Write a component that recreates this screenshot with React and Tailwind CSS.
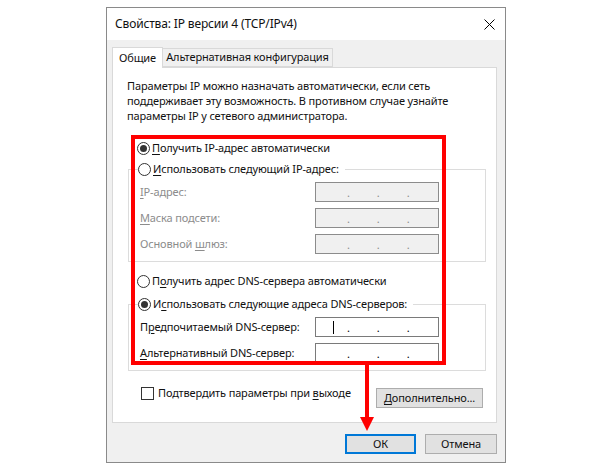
import React from "react";

const Radio = ({ checked }) => (
    <span className="w-[13px] h-[13px] rounded-full border border-[#333] bg-white flex items-center justify-center shrink-0">
        {checked && <span className="w-[7px] h-[7px] rounded-full bg-[#333]"></span>}
    </span>
);

// mnemonic letter, underlined like in Windows dialogs
const U = ({ children }) => <span className="underline underline-offset-[2px]">{children}</span>;

const IpField = ({ disabled, caret }) => (
    <div
        className={`relative w-[124px] h-[20px] border flex items-end pb-[3px] shrink-0 ${
            disabled ? "bg-[#f0f0f0] border-[#8c8c8c] text-[#8c8c8c]" : "bg-white border-[#7a7a7a] text-black"
        }`}
    >
        {caret && <span className="absolute left-[17px] top-[3px] w-px h-[13px] bg-black"></span>}
        <div className="flex gap-[27px] ml-[31px] leading-none">
            <span>.</span>
            <span>.</span>
            <span>.</span>
        </div>
    </div>
);

const FieldRow = ({ label, disabled, caret }) => (
    <div className="flex items-center h-[20px]">
        <span className={`w-[175px] whitespace-nowrap ${disabled ? "text-[#8c8c8c]" : "text-[#111]"}`}>{label}</span>
        <IpField disabled={disabled} caret={caret} />
    </div>
);

const Button = ({ children, primary, className = "" }) => (
    <div
        className={`h-[20px] bg-[#e1e1e1] flex items-center justify-center whitespace-nowrap ${
            primary ? "border-2 border-[#0078d7]" : "border border-[#adadad]"
        } ${className}`}
    >
        {children}
    </div>
);

export default function App() {
    return (
        <div
            className="relative w-[610px] h-[473px] bg-white pt-[7px] pl-[106px] text-[11px] tracking-[-0.15px] text-[#111] whitespace-nowrap"
            style={{ fontFamily: '"Noto Sans", "Liberation Sans", sans-serif' }}
        >
            {/* dialog */}
            <div className="w-[400px] h-[456px] border border-[#8a8a8a] bg-[#f0f0f0] flex flex-col">
                <div className="h-[32px] bg-white flex items-center justify-between pl-[8px] pr-[10px]">
                    <span className="text-[12px]">Свойства: IP версии 4 (TCP/IPv4)</span>
                    <svg width="11" height="11" viewBox="0 0 11 11">
                        <path d="M0.5 0.5 L10.5 10.5 M10.5 0.5 L0.5 10.5" stroke="#000" strokeWidth="1" />
                    </svg>
                </div>

                <div className="pl-[5px] pt-[7px]">
                    {/* tabs */}
                    <div className="flex items-end h-[21px] relative z-10">
                        <div className="w-[51px] h-[21px] bg-white border border-b-0 border-[#d9d9d9] flex items-center justify-center">
                            Общие
                        </div>
                        <div className="w-[170px] h-[19px] mb-px bg-[#f0f0f0] border border-l-0 border-[#d9d9d9] flex items-center justify-center">
                            Альтернативная конфигурация
                        </div>
                    </div>

                    {/* panel */}
                    <div className="w-[385px] h-[356px] -mt-px bg-white border border-[#d9d9d9]">
                        <p className="ml-[14px] mt-[10px] leading-[15px]">
                            Параметры IP можно назначать автоматически, если сеть
                            <br />
                            поддерживает эту возможность. В противном случае узнайте
                            <br />
                            параметры IP у сетевого администратора.
                        </p>

                        <div className="ml-[24px] mt-[17px] h-[16px] flex items-center gap-[2px]">
                            <Radio checked />
                            <span>
                                <U>П</U>олучить IP-адрес автоматически
                            </span>
                        </div>

                        <div className="ml-[15px] mt-[13px] w-[358px] border border-[#dcdcdc] pl-[11px] pb-[7px]">
                            <div className="-mt-[9px] -ml-[2px] h-[16px] flex items-center gap-[2px] bg-white w-fit pr-[6px]">
                                <Radio />
                                <span>
                                    <U>И</U>спользовать следующий IP-адрес:
                                </span>
                            </div>
                            <div className="mt-[5px] flex flex-col gap-[6px]">
                                <FieldRow disabled label={<><U>I</U>P-адрес:</>} />
                                <FieldRow disabled label={<><U>М</U>аска подсети:</>} />
                                <FieldRow disabled label={<>Основной <U>ш</U>люз:</>} />
                            </div>
                        </div>

                        <div className="ml-[24px] mt-[11px] h-[16px] flex items-center gap-[2px]">
                            <Radio />
                            <span>
                                П<U>о</U>лучить адрес DNS-сервера автоматически
                            </span>
                        </div>

                        <div className="ml-[15px] mt-[15px] w-[358px] border border-[#dcdcdc] pl-[11px] pb-[7px]">
                            <div className="-mt-[9px] -ml-[2px] h-[16px] flex items-center gap-[2px] bg-white w-fit pr-[6px]">
                                <Radio checked />
                                <span>
                                    И<U>с</U>пользовать следующие адреса DNS-серверов:
                                </span>
                            </div>
                            <div className="mt-[5px] flex flex-col gap-[6px]">
                                <FieldRow caret label={<>П<U>р</U>едпочитаемый DNS-сервер:</>} />
                                <FieldRow label={<><U>А</U>льтернативный DNS-сервер:</>} />
                            </div>
                        </div>

                        <div className="mt-[16px] pl-[28px] pr-[13px] flex items-start justify-between">
                            <div className="flex items-center gap-[4px] h-[13px]">
                                <span className="w-[13px] h-[13px] border border-[#333] bg-white"></span>
                                <span>
                                    Подтвердить параметры при <U>в</U>ыходе
                                </span>
                            </div>
                            <Button className="w-[107px] mt-px">
                                <span>
                                    <U>Д</U>ополнительно...
                                </span>
                            </Button>
                        </div>
                    </div>

                    <div className="mt-[11px] pr-[8px] flex justify-end gap-[9px]">
                        <Button primary className="w-[71px]">
                            ОК
                        </Button>
                        <Button className="w-[72px]">Отмена</Button>
                    </div>
                </div>
            </div>

            {/* red annotation box and arrow */}
            <div className="absolute left-[131px] top-[135px] w-[315px] h-[230px] border-[4px] border-[#ff0000]"></div>
            <svg className="absolute left-[358px] top-[364px]" width="18" height="68" viewBox="0 0 18 68">
                <rect x="7" y="0" width="4" height="54" fill="#ff0000" />
                <polygon points="2,53 16,53 9,67" fill="#ff0000" />
            </svg>
        </div>
    );
}
